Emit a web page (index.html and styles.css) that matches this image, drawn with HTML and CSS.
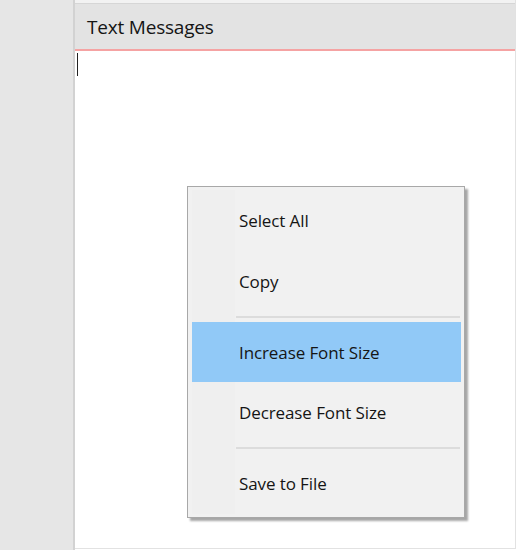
FILE: index.html
```html
<!DOCTYPE html>
<html>
<head>
<meta charset="utf-8">
<link rel="stylesheet" href="styles.css">
</head>
<body>
<div class="app">
  <div class="sidebar"></div>
  <div class="main">
    <div class="topstrip"></div>
    <div class="header">Text Messages</div>
    <div class="content">
      <span class="caret"></span>
    </div>
  </div>
</div>
<div class="menu">
  <div class="item">Select All</div>
  <div class="item">Copy</div>
  <div class="sep"></div>
  <div class="item active">Increase Font Size</div>
  <div class="item">Decrease Font Size</div>
  <div class="sep"></div>
  <div class="item">Save to File</div>
</div>
</body>
</html>
```

FILE: styles.css
```css
html, body {
  margin: 0;
  padding: 0;
  background: #ffffff;
  font-family: "Open Sans", "Noto Sans", sans-serif;
  color: #151515;
}

.app {
  display: flex;
  width: 517px;
  height: 550px;
}

.sidebar {
  width: 73px;
  background: #e6e6e6;
  border-right: 2px solid #d2d2d2;
}

.main {
  flex: 1;
  display: flex;
  flex-direction: column;
  margin-right: 1px;
  margin-bottom: 1px;
  border-right: 1px solid #e2e2e2;
  border-bottom: 1px solid #e2e2e2;
}

.topstrip {
  height: 3px;
  background: #f2f2f2;
  border-bottom: 1px solid #d6d6d6;
}

.header {
  height: 47px;
  box-sizing: border-box;
  background: #e3e3e3;
  border-bottom: 2px solid #f5a3a3;
  display: flex;
  align-items: center;
  padding-left: 12px;
  padding-top: 1px;
  font-size: 19px;
  letter-spacing: -0.2px;
}

.content {
  flex: 1;
  padding: 2px 0 0 2px;
}

.caret {
  display: block;
  width: 1px;
  height: 23px;
  background: #222;
}

.menu {
  position: absolute;
  left: 187px;
  top: 186px;
  width: 269px;
  height: 324px;
  padding: 3px 3px 3px 4px;
  background: #f1f1f1;
  background-image: linear-gradient(to right, #efefef 0, #efefef 43px, #f1f1f1 43px);
  background-origin: content-box;
  background-repeat: no-repeat;
  border: 1px solid #a8a8a8;
  box-shadow: 3px 3px 2px rgba(0, 0, 0, 0.35);
}

.item {
  height: 61px;
  display: flex;
  align-items: center;
  padding-left: 47px;
  font-size: 17px;
  letter-spacing: -0.1px;
}

.item.active {
  background: #91c9f7;
  height: 60px;
}

.sep {
  height: 10px;
  display: flex;
  align-items: center;
  margin-left: 44px;
  margin-right: 1px;
}

.sep::before {
  content: "";
  flex: 1;
  height: 2px;
  background: #dcdcdc;
}
```
